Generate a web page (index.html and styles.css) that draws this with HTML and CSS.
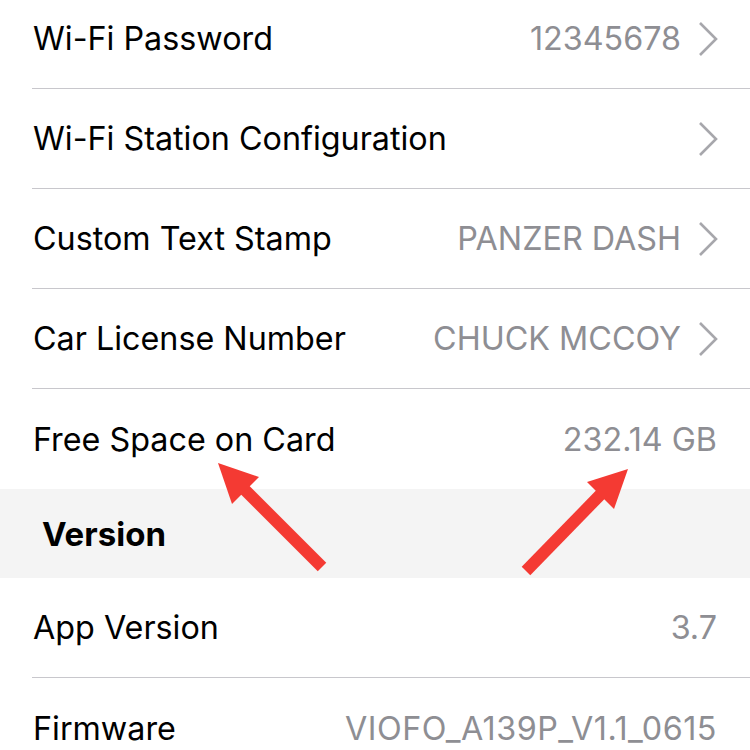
FILE: index.html
```html
<!DOCTYPE html>
<html>
<head>
<meta charset="utf-8">
<link rel="stylesheet" href="styles.css">
</head>
<body>
<div class="screen">
  <div class="group first">
    <div class="row">
      <span class="label">Wi-Fi Password</span>
      <span class="value">12345678</span>
      <svg class="chev" viewBox="0 0 20 36"><polyline points="2,2 18,18 2,34"/></svg>
    </div>
    <div class="row">
      <span class="label">Wi-Fi Station Configuration</span>
      <span class="value"></span>
      <svg class="chev" viewBox="0 0 20 36"><polyline points="2,2 18,18 2,34"/></svg>
    </div>
    <div class="row">
      <span class="label">Custom Text Stamp</span>
      <span class="value">PANZER DASH</span>
      <svg class="chev" viewBox="0 0 20 36"><polyline points="2,2 18,18 2,34"/></svg>
    </div>
    <div class="row">
      <span class="label">Car License Number</span>
      <span class="value">CHUCK MCCOY</span>
      <svg class="chev" viewBox="0 0 20 36"><polyline points="2,2 18,18 2,34"/></svg>
    </div>
    <div class="row last">
      <span class="label">Free Space on Card</span>
      <span class="value">232.14 GB</span>
    </div>
  </div>
  <div class="section-header">Version</div>
  <div class="group">
    <div class="row">
      <span class="label">App Version</span>
      <span class="value">3.7</span>
    </div>
    <div class="row last">
      <span class="label">Firmware</span>
      <span class="value wide">VIOFO_A139P_V1.1_0615</span>
    </div>
  </div>
  <svg class="arrows" viewBox="0 0 750 750" width="750" height="750">
    <line x1="245" y1="490" x2="322" y2="567" class="shaft"/>
    <polygon points="218,463 259,477 232,504" class="head"/>
    <line x1="601" y1="494" x2="526" y2="571" class="shaft"/>
    <polygon points="628,469 587,482 614,509" class="head"/>
  </svg>
</div>
</body>
</html>
```
FILE: styles.css
```css
html, body {
  margin: 0;
  padding: 0;
  background: #ffffff;
}
.screen {
  position: relative;
  width: 750px;
  height: 750px;
  overflow: hidden;
  font-family: Inter, "Liberation Sans", sans-serif;
  color: #000;
}
.group.first {
  margin-top: -11px;
}
.row {
  display: flex;
  align-items: center;
  height: 99px;
  margin-left: 32px;
  padding-left: 1px;
  padding-right: 33px;
  border-bottom: 1px solid #c8c7cc;
}
.row.last {
  border-bottom: none;
  height: 100px;
}
.label {
  font-size: 32.3px;
  flex: 1;
  white-space: nowrap;
}
.value {
  font-size: 32.3px;
  color: #8e8e93;
  white-space: nowrap;
}
.value.wide {
  letter-spacing: 0.5px;
}
.chev {
  width: 20px;
  height: 36px;
  margin-left: 17px;
  margin-right: -1px;
  fill: none;
  stroke: #a7a7ac;
  stroke-width: 2.6;
}
.section-header {
  height: 89px;
  background: #f4f4f4;
  display: flex;
  align-items: center;
  padding-left: 42px;
  font-size: 33px;
  font-weight: 700;
}
.arrows {
  position: absolute;
  left: 0;
  top: 0;
  pointer-events: none;
}
.shaft {
  stroke: #f43a33;
  stroke-width: 12;
}
.head {
  fill: #f43a33;
}
```
